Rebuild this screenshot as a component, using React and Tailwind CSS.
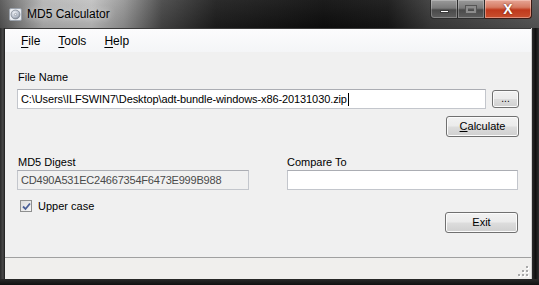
import React from "react";

const WinButton = ({ className = "", children }) => (
	<div
		className={`flex items-center justify-center rounded-[3px] border border-[#707070] bg-[linear-gradient(180deg,#f2f2f2_0%,#ebebeb_48%,#dddddd_52%,#cfcfcf_100%)] shadow-[inset_0_0_0_1px_#fbfbfb] text-[11px] text-black ${className}`}
	>
		{children}
	</div>
);

const TextBox = ({ className = "", children }) => (
	<div
		className={`flex h-[20px] items-center border border-[#c3c6cc] border-t-[#abadb3] px-[3px] text-[11px] leading-none ${className}`}
	>
		{children}
	</div>
);

const Label = ({ className = "", children }) => (
	<div className={`h-[13px] text-[11px] leading-[13px] text-black ${className}`}>{children}</div>
);

const AppIcon = () => (
	<svg width="13" height="13" viewBox="0 0 13 13">
		<defs>
			<radialGradient id="disc" cx="40%" cy="35%" r="70%">
				<stop offset="0%" stopColor="#f4f6fa" />
				<stop offset="60%" stopColor="#b9c0cc" />
				<stop offset="100%" stopColor="#7f8794" />
			</radialGradient>
		</defs>
		<rect x="0.5" y="0.5" width="12" height="12" rx="1.5" fill="#e9ecf1" stroke="#9aa1ab" />
		<circle cx="6.5" cy="6.5" r="4.5" fill="url(#disc)" stroke="#6f7782" strokeWidth="0.6" />
		<circle cx="6.5" cy="6.5" r="1.2" fill="#eef0f4" stroke="#6f7782" strokeWidth="0.5" />
	</svg>
);

const Grip = () => (
	<svg width="12" height="12" viewBox="0 0 12 12">
		{[
			[9, 1],
			[5, 5],
			[9, 5],
			[1, 9],
			[5, 9],
			[9, 9],
		].map(([x, y]) => (
			<g key={`${x}-${y}`}>
				<rect x={x + 1} y={y + 1} width="2" height="2" fill="#ffffff" />
				<rect x={x} y={y} width="2" height="2" fill="#a8a8a8" />
			</g>
		))}
	</svg>
);

export default function App() {
	return (
		<div className="flex h-[285px] w-[539px] flex-col overflow-hidden bg-[#1b1b1b] font-['Liberation_Sans',Arial,sans-serif]">
			{/* title bar */}
			<div className="flex h-[28px] items-start bg-[linear-gradient(180deg,rgba(255,255,255,0.06),rgba(0,0,0,0.12)),linear-gradient(90deg,#555_0%,#7d7d7d_3%,#b5b5b5_8%,#c2c2c2_17%,#969696_23%,#484848_30%,#1e1e1e_40%,#0e0e0e_60%,#161616_72%,#3c3c3c_80%,#5a5a5a_100%)] pr-[7px]">
				<div className="flex h-full flex-1 items-center gap-[5px] pl-[9px]">
					<AppIcon />
					<span className="text-[12px] text-black [text-shadow:0_0_6px_#e8e8e8]">MD5 Calculator</span>
				</div>
				<div className="flex h-[19px]">
					<div className="flex w-[28px] items-center justify-center rounded-bl-[4px] border border-t-0 border-[#2c2c2c] bg-[linear-gradient(180deg,#9a9a9a_0%,#7a7a7a_45%,#4a4a4a_55%,#5e5e5e_100%)] shadow-[inset_0_0_0_1px_rgba(255,255,255,0.25)]">
						<div className="mt-[5px] h-[3px] w-[9px] border border-[#3a3a3a] bg-white" />
					</div>
					<div className="flex w-[27px] items-center justify-center border-b border-r border-[#2c2c2c] bg-[linear-gradient(180deg,#9a9a9a_0%,#7a7a7a_45%,#4a4a4a_55%,#5e5e5e_100%)] shadow-[inset_0_0_0_1px_rgba(255,255,255,0.25)]">
						<div className="h-[7px] w-[10px] border-2 border-[#8c8c8c] outline outline-[#555]" />
					</div>
					<div className="flex w-[47px] items-center justify-center rounded-br-[4px] border border-l-0 border-t-0 border-[#3a1a14] bg-[linear-gradient(180deg,#e6a595_0%,#d67b63_40%,#c0391c_55%,#c9502f_100%)] shadow-[inset_0_0_0_1px_rgba(255,220,210,0.45)]">
						<span className="text-[14px] font-bold leading-none text-white [text-shadow:0_0_2px_#5a1a10]">X</span>
					</div>
				</div>
			</div>

			{/* frame + client */}
			<div className="flex flex-1">
				<div className="w-[5px] bg-[linear-gradient(90deg,#2a2a2a,#4a4a4a_60%,#1a1a1a)]" />
				<div className="flex w-[526px] flex-col border-t border-[#3a3a3a] bg-[#f0f0f0]">
					{/* menu */}
					<div className="flex h-[23px] items-center gap-[18px] bg-[linear-gradient(180deg,#fcfcfd,#f4f5f7)] pl-[16px] text-[12px] text-black">
						<span>
							<span className="underline underline-offset-2">F</span>ile
						</span>
						<span>
							<span className="underline underline-offset-2">T</span>ools
						</span>
						<span>
							<span className="underline underline-offset-2">H</span>elp
						</span>
					</div>

					{/* body */}
					<div className="flex flex-1 flex-col px-[12px] pt-[19px]">
						<Label className="pl-[1px]">File Name</Label>
						<div className="mt-[5px] flex items-center gap-[6px]">
							<TextBox className="flex-1 bg-white text-black tracking-[-0.1px]">
								<span>C:\Users\ILFSWIN7\Desktop\adt-bundle-windows-x86-20131030.zip</span>
								<span className="ml-[1px] h-[13px] w-[1px] bg-black" />
							</TextBox>
							<WinButton className="h-[18px] w-[27px]">
								<span className="text-[10px] leading-none">...</span>
							</WinButton>
						</div>
						<div className="mt-[7px] flex justify-end">
							<WinButton className="h-[21px] w-[73px]">
								<span>
									<span className="underline">C</span>alculate
								</span>
							</WinButton>
						</div>

						<div className="mt-[19px] grid grid-cols-[232px_231px] gap-x-[38px]">
							<div className="flex flex-col">
								<Label className="pl-[1px]">MD5 Digest</Label>
								<TextBox className="mt-[1px] bg-[#f0f0f0] text-[#4a4a4a] tracking-[-0.2px]">
									CD490A531EC24667354F6473E999B988
								</TextBox>
								<div className="mt-[8px] flex items-center gap-[6px] pl-[3px]">
									<div className="flex h-[12px] w-[12px] items-center justify-center border border-[#8e8f8f] bg-[linear-gradient(135deg,#dcdcdc,#f6f6f6)]">
										<svg width="9" height="9" viewBox="0 0 9 9">
											<path d="M1 4.5 L3.5 7 L8 1.5" fill="none" stroke="#4a5f97" strokeWidth="1.8" />
										</svg>
									</div>
									<span className="text-[11px] text-black">Upper case</span>
								</div>
							</div>
							<div className="flex flex-col">
								<Label>Compare To</Label>
								<TextBox className="mt-[1px] bg-white" />
								<div className="mt-[22px] flex justify-end">
									<WinButton className="h-[21px] w-[73px]">Exit</WinButton>
								</div>
							</div>
						</div>
					</div>

					{/* status bar */}
					<div className="flex h-[22px] items-end justify-end border-t border-[#a0a0a0] bg-[#f0efed] pb-[2px] pr-[2px]">
						<Grip />
					</div>
				</div>
				<div className="w-[8px] border-l border-[#cfcfcf] bg-[linear-gradient(90deg,#2a2a2a,#111_50%,#2e2e2e)]" />
			</div>
			<div className="h-[6px] bg-[linear-gradient(180deg,#2a2a2a,#101010)]" />
		</div>
	);
}
